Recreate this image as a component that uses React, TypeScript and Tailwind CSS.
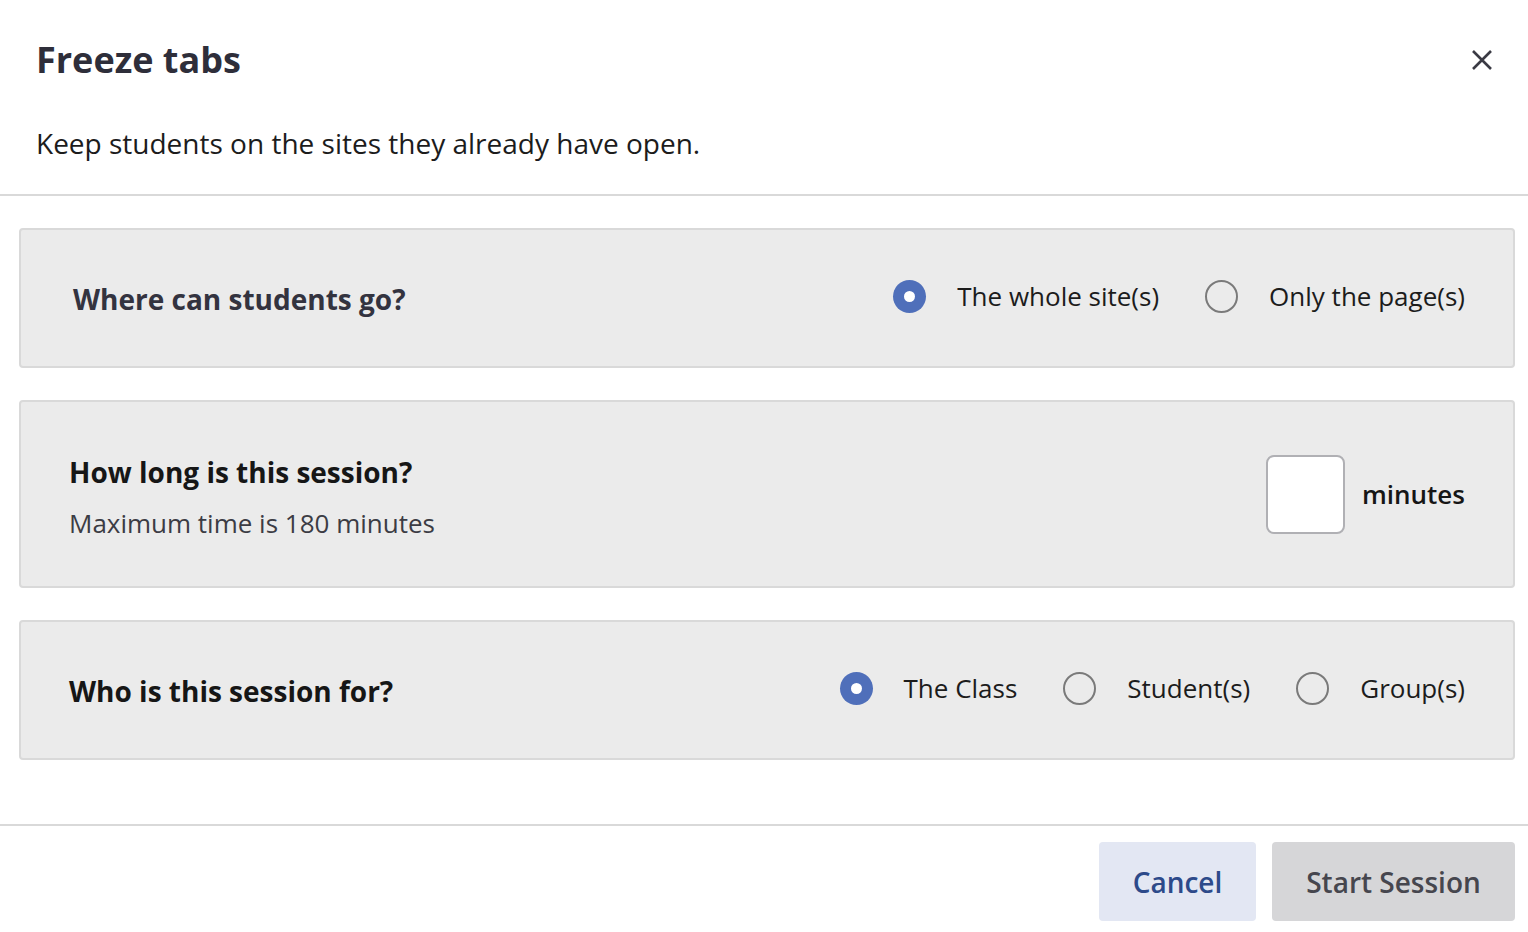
import React from "react";

function Radio({ checked }: { checked?: boolean }) {
  return checked ? (
    <span className="flex h-[33px] w-[33px] shrink-0 items-center justify-center rounded-full bg-[#4f6fba]">
      <span className="h-[11px] w-[11px] rounded-full bg-white" />
    </span>
  ) : (
    <span className="h-[33px] w-[33px] shrink-0 rounded-full border-[2px] border-[#7a7a7a] bg-[#ebebeb]" />
  );
}

function Option({ checked, label }: { checked?: boolean; label: string }) {
  return (
    <label className="flex items-center gap-[31px]">
      <Radio checked={checked} />
      <span className="text-[26px] text-[#1c1c1c]">{label}</span>
    </label>
  );
}

export default function App() {
  return (
    <div
      className="flex h-[932px] w-[1528px] flex-col bg-white"
      style={{ fontFamily: '"Open Sans", "Noto Sans", sans-serif' }}
    >
      <div className="flex items-center justify-between pl-[36px] pr-[30px] pt-[34px]">
        <h1 className="text-[36px] font-bold leading-[52px] text-[#2e2e3a]">Freeze tabs</h1>
        <button className="flex h-[32px] w-[32px] items-center justify-center text-[#3a3a44]">
          <svg width="24" height="24" viewBox="0 0 24 24" fill="none" stroke="currentColor" strokeWidth="2.6" strokeLinecap="butt">
            <path d="M3 3L21 21M21 3L3 21" />
          </svg>
        </button>
      </div>
      <p className="pl-[36px] pt-[37px] text-[28px] leading-[40px] text-[#1c1c1c]">
        Keep students on the sites they already have open.
      </p>
      <div className="mt-[31px] h-[2px] bg-[#d9d9d9]" />

      <div className="flex flex-col gap-[32px] pl-[19px] pr-[13px] pt-[32px]">
        <div className="flex h-[140px] items-center justify-between rounded-[4px] border-[2px] border-[#d9d9d9] bg-[#ebebeb] pb-[4px] pl-[52px] pr-[48px]">
          <span className="pt-[5px] text-[28px] font-bold text-[#33333f]">Where can students go?</span>
          <div className="flex items-center gap-[46px]">
            <Option checked label="The whole site(s)" />
            <Option label="Only the page(s)" />
          </div>
        </div>

        <div className="flex h-[188px] items-center justify-between rounded-[4px] border-[2px] border-[#d9d9d9] bg-[#ebebeb] pl-[48px] pr-[48px]">
          <div className="flex flex-col pt-[6px]">
            <span className="text-[28px] font-bold leading-[40px] text-[#161616]">How long is this session?</span>
            <span className="mt-[12px] text-[26px] leading-[38px] text-[#3c3c44]">Maximum time is 180 minutes</span>
          </div>
          <div className="flex items-center gap-[17px]">
            <input className="h-[79px] w-[79px] rounded-[8px] border-[2px] border-[#b0b0b4] bg-white outline-none" />
            <span className="text-[26px] font-semibold text-[#161616]">minutes</span>
          </div>
        </div>

        <div className="flex h-[140px] items-center justify-between rounded-[4px] border-[2px] border-[#d9d9d9] bg-[#ebebeb] pb-[4px] pl-[48px] pr-[48px]">
          <span className="pt-[5px] text-[28px] font-bold text-[#161616]">Who is this session for?</span>
          <div className="flex items-center gap-[46px]">
            <Option checked label="The Class" />
            <Option label="Student(s)" />
            <Option label="Group(s)" />
          </div>
        </div>
      </div>

      <div className="mt-[64px] h-[2px] bg-[#d9d9d9]" />
      <div className="flex justify-end gap-[16px] pr-[13px] pt-[16px]">
        <button className="h-[79px] w-[157px] rounded-[4px] bg-[#e3e7f3] text-[28px] font-semibold text-[#2d4a8a]">Cancel</button>
        <button className="h-[79px] w-[243px] rounded-[4px] bg-[#d6d6d8] text-[28px] font-semibold text-[#46464e]">Start Session</button>
      </div>
    </div>
  );
}
